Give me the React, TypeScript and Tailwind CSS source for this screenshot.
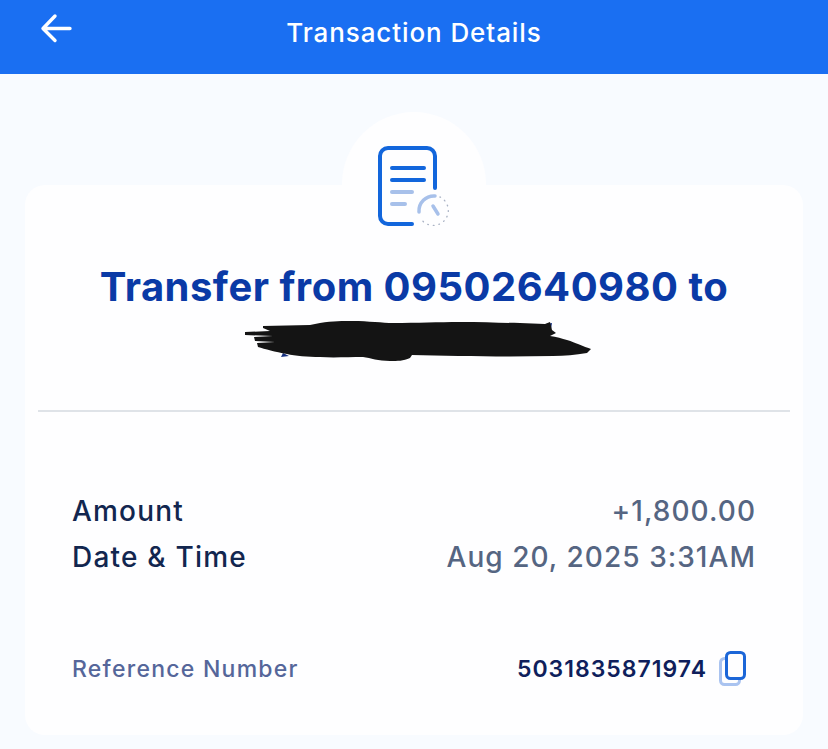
export default function App() {
  return (
    <div className="w-[828px] h-[749px] overflow-hidden bg-[#f8fbff] flex flex-col font-['Inter','Liberation_Sans',sans-serif]">
      <header className="h-[74px] shrink-0 bg-[#1a6ff2] relative flex justify-center pt-[16px]">
        <svg className="absolute left-[39px] top-[13px]" width="34" height="30" viewBox="0 0 34 30" fill="none">
          <path d="M16 3 L4 15.5 L16 27.5 M4 15.5 H31" stroke="white" strokeWidth="3.4" strokeLinecap="round" strokeLinejoin="round" />
        </svg>
        <h1 className="text-[26px] leading-[34px] font-medium tracking-[0.9px] text-white">Transaction Details</h1>
      </header>
      <main className="relative flex-1 px-[25px] pt-[111px]">
        <div className="absolute left-[342px] top-[38px] w-[144px] h-[144px] rounded-full bg-[#fefeff]" />
        <section className="relative h-[550px] rounded-[20px] bg-[#fefeff]">
          <svg className="absolute left-[350px] top-[-42px]" width="78" height="90" viewBox="0 0 78 90" fill="none">
            <path d="M60 45 V13 A8 8 0 0 0 52 5 H13 A8 8 0 0 0 5 13 V73 A8 8 0 0 0 13 81 H37" stroke="#1266dc" strokeWidth="4" strokeLinecap="round" />
            <path d="M17 25 H49 M17 37 H49" stroke="#1266dc" strokeWidth="4" strokeLinecap="round" />
            <path d="M17 49 H37 M17 61 H30" stroke="#a7c0ea" strokeWidth="4" strokeLinecap="round" />
            <path d="M44 69 A15 15 0 0 1 60 53" stroke="#a7c0ea" strokeWidth="3.5" strokeLinecap="round" />
            <path d="M58 63 L63 71" stroke="#a7c0ea" strokeWidth="3.5" strokeLinecap="round" />
            <path d="M65 54 A15 15 0 1 1 46 76" stroke="#a9b2c4" strokeWidth="1.4" strokeDasharray="0.6 5" strokeLinecap="round" />
          </svg>
          <h2 className="pt-[77px] text-center text-[40px] leading-[50px] font-bold tracking-[0.48px] text-[#0a3aa6]">Transfer from 09502640980 to</h2>
          <div className="h-[98px] relative">
            <svg className="absolute left-[218px] top-[4px]" width="352" height="48" viewBox="0 0 352 48" fill="none">
              <path d="M40 37 L46 40 L38 41 Z M303 8 L309 7 L308 13 Z" fill="#16307f" />
              <path d="M20 10 L67 9 L77 7 C90 5 100 5 110 5 C125 5 140 7 150 7 C175 7 195 6 217 6 C240 6 260 7 277 7 L302 8 L307 6 L309 14 L313 17 L307 20 C320 22 330 26 335 28 C340 30 345 32 348 33 L344 37 C332 39 322 40 310 40 C260 41 210 40 169 39 L167 42 C160 45 155 45 147 45 C135 45 128 42 120 41 C105 41 90 42 77 41 C65 41 52 40 44 38 C32 36 22 33 15 31 L14 27 L32 26 L12 25 L11 21 L30 20 L2 19 L2 16 L27 15 L20 12 Z" fill="#141414" />
            </svg>
          </div>
          <div className="mx-[13px] h-[2px] bg-[#dfe3e8]" />
          <dl className="px-[47px] pt-[76px]">
            <div className="flex justify-between items-center h-[46px] text-[28px] tracking-[1.2px]">
              <dt className="font-medium text-[#12264f]">Amount</dt>
              <dd className="font-medium tracking-[1.04px] text-[#556582]">+1,800.00</dd>
            </div>
            <div className="flex justify-between items-center h-[46px] text-[28px] tracking-[1.2px]">
              <dt className="font-medium text-[#12264f]">Date &amp; Time</dt>
              <dd className="font-medium tracking-[1.04px] text-[#556582]">Aug 20, 2025 3:31AM</dd>
            </div>
            <div className="flex justify-between items-center mt-[66px] h-[46px]">
              <dt className="text-[23px] font-medium tracking-[1.25px] text-[#55669a]">Reference Number</dt>
              <dd className="flex items-center gap-[12px] text-[23px] font-semibold tracking-[1px] text-[#0f1f5c]">
                5031835871974
                <svg width="30" height="36" viewBox="0 0 30 36" fill="none" className="mr-[7px]">
                  <rect x="1.5" y="7.5" width="19" height="26" rx="4" stroke="#a9c3f0" strokeWidth="3" />
                  <rect x="7.5" y="1.5" width="18" height="26" rx="4" fill="#fefeff" stroke="#1b66d8" strokeWidth="3" />
                </svg>
              </dd>
            </div>
          </dl>
        </section>
      </main>
    </div>
  );
}
